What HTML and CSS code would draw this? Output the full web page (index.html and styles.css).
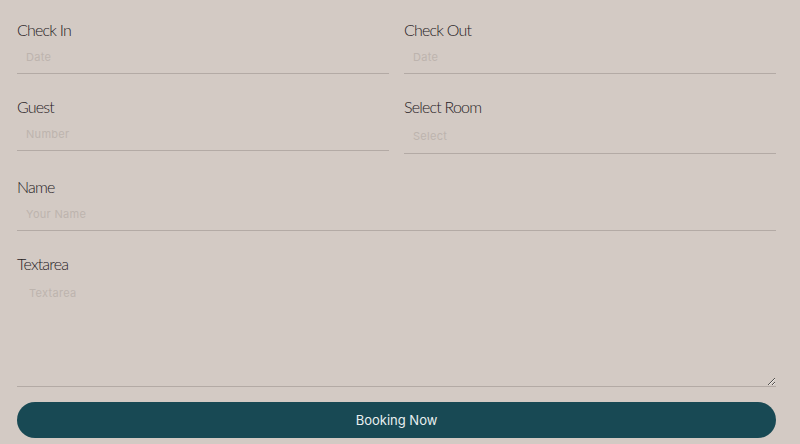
FILE: index.html
```html
<!DOCTYPE html>
<html lang="en">
<head>
<meta charset="utf-8">
<title>Booking</title>
<link rel="stylesheet" href="styles.css">
</head>
<body>
<form class="booking">
  <div class="row">
    <div class="field">
      <label class="label">Check In</label>
      <input class="input" type="text" placeholder="Date">
    </div>
    <div class="field">
      <label class="label">Check Out</label>
      <input class="input" type="text" placeholder="Date">
    </div>
  </div>
  <div class="row">
    <div class="field">
      <label class="label">Guest</label>
      <input class="input" type="text" placeholder="Number">
    </div>
    <div class="field">
      <label class="label">Select Room</label>
      <select class="input select"><option>Select</option></select>
    </div>
  </div>
  <div class="field">
    <label class="label">Name</label>
    <input class="input" type="text" placeholder="Your Name">
  </div>
  <div class="field">
    <label class="label">Textarea</label>
    <textarea class="input textarea" placeholder="Textarea"></textarea>
  </div>
  <button class="submit" type="button">Booking Now</button>
</form>
</body>
</html>
```
FILE: styles.css
```css
html, body {
  margin: 0;
  padding: 0;
  background: #d3cac4;
}
.booking {
  width: 759px;
  margin-left: 17px;
  padding-top: 20px;
  display: flex;
  flex-direction: column;
}
.row {
  display: grid;
  grid-template-columns: 372px 372px;
  column-gap: 15px;
  align-items: start;
}
.field {
  display: flex;
  flex-direction: column;
  margin-bottom: 23px;
}
.label {
  font-family: "Lato", sans-serif;
  font-weight: 300;
  font-size: 16px;
  line-height: 20px;
  letter-spacing: -0.8px;
  color: #27211f;
}
.input {
  box-sizing: border-box;
  height: 34px;
  margin: 0;
  padding: 0 9px;
  border: 0;
  border-bottom: 1px solid #b3aaa5;
  background: transparent;
  font-family: "Inter", sans-serif;
  font-size: 11px;
  letter-spacing: 0.3px;
  color: #bdb4ae;
  outline: none;
  border-radius: 0;
}
.input::placeholder {
  color: #bdb4ae;
}
.select {
  height: 37px;
  appearance: none;
  -webkit-appearance: none;
  padding-top: 1px;
}
.textarea {
  height: 113px;
  padding: 12px 12px;
  resize: vertical;
  margin-bottom: -8px;
}
.submit {
  width: 759px;
  height: 36px;
  margin: 0;
  border: 0;
  border-radius: 18px;
  background: #184954;
  color: #e9eff0;
  font-family: "Inter", sans-serif;
  font-size: 13px;
  font-weight: 400;
}
```
